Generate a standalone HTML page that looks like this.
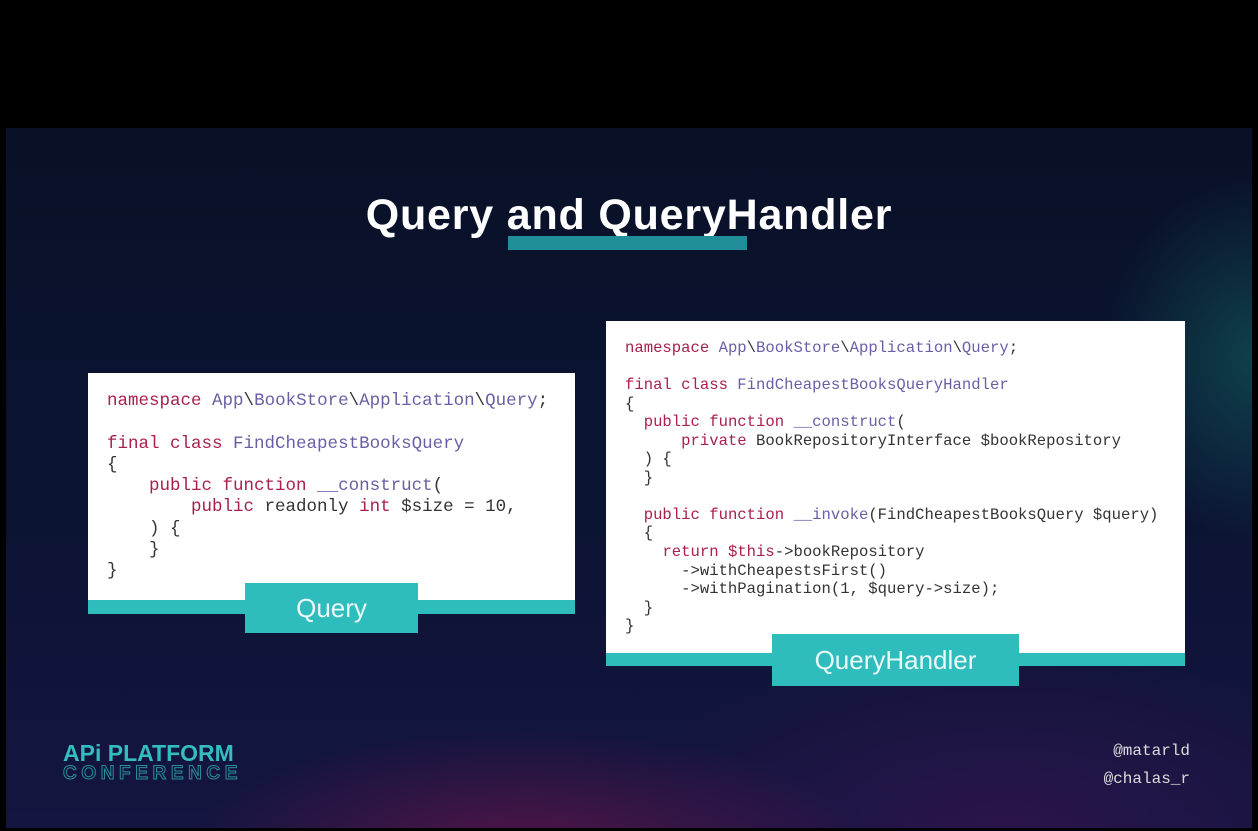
<!DOCTYPE html>
<html><head><meta charset="utf-8"><style>
*{margin:0;padding:0;box-sizing:border-box}
body{width:1258px;height:831px;background:#000;position:relative;overflow:hidden;font-family:"Liberation Sans",sans-serif}
.slide{position:absolute;left:6px;top:128px;width:1246px;height:700px;overflow:hidden;
background:
radial-gradient(ellipse 220px 260px at 1250px 230px,rgba(20,120,110,.45),transparent 70%),
radial-gradient(ellipse 450px 160px at 520px 720px,rgba(140,20,80,.5),transparent 75%),
radial-gradient(ellipse 500px 250px at 1000px 700px,rgba(70,20,90,.45),transparent 75%),
linear-gradient(180deg,#091128 0%,#0b1432 50%,#141540 100%);}
h1{position:absolute;left:0;width:1258px;top:191px;text-align:center;color:#fff;font-size:43px;font-weight:bold;letter-spacing:0.8px}
.ul{position:absolute;left:508px;top:236px;width:239px;height:14px;background:#1f8e98}
.card{position:absolute;background:#fff}
.bar{position:absolute;background:#2fbcbd}
.tab{position:absolute;background:#2fbcbd;color:#eaf8f8;text-align:center;font-size:26px}
pre{position:absolute;font-family:"Liberation Mono",monospace;color:#333}
.k{color:#a8204e}.c{color:#6b5ea6}
.l{font-size:17.5px;line-height:21.3px}
.r{font-size:15.6px;line-height:18.55px}
.h{position:absolute;right:68px;color:#ddd;font-family:"Liberation Mono",monospace;font-size:16px;text-align:right}
</style></head><body>
<div class="slide"></div>
<h1>Query and QueryHandler</h1>
<div class="ul"></div>
<div class="card" style="left:88px;top:373px;width:487px;height:228px"></div>
<div class="bar" style="left:88px;top:600px;width:487px;height:14px"></div>
<div class="tab" style="left:245px;top:583px;width:173px;height:50px;line-height:50px">Query</div>
<pre class="l" style="left:107px;top:391px"><span class="k">namespace</span> <span class="c">App</span>\<span class="c">BookStore</span>\<span class="c">Application</span>\<span class="c">Query</span>;

<span class="k">final class</span> <span class="c">FindCheapestBooksQuery</span>
{
    <span class="k">public function</span> <span class="c">__construct</span>(
        <span class="k">public</span> readonly <span class="k">int</span> $size = 10,
    ) {
    }
}</pre>
<div class="card" style="left:606px;top:321px;width:579px;height:333px"></div>
<div class="bar" style="left:606px;top:653px;width:579px;height:13px"></div>
<div class="tab" style="left:772px;top:634px;width:247px;height:52px;line-height:52px">QueryHandler</div>
<pre class="r" style="left:625px;top:339px"><span class="k">namespace</span> <span class="c">App</span>\<span class="c">BookStore</span>\<span class="c">Application</span>\<span class="c">Query</span>;

<span class="k">final class</span> <span class="c">FindCheapestBooksQueryHandler</span>
{
  <span class="k">public function</span> <span class="c">__construct</span>(
      <span class="k">private</span> BookRepositoryInterface $bookRepository
  ) {
  }

  <span class="k">public function</span> <span class="c">__invoke</span>(FindCheapestBooksQuery $query)
  {
    <span class="k">return</span> <span class="k">$this</span>->bookRepository
      ->withCheapestsFirst()
      ->withPagination(1, $query->size);
  }
}</pre>
<div style="position:absolute;left:63px;top:741px;color:#35bcc0;font-weight:bold;font-size:23px;letter-spacing:0px;line-height:24px">APi PLATFORM</div>
<div style="position:absolute;left:63px;top:764px;color:transparent;-webkit-text-stroke:1px #2a8f9a;font-weight:bold;font-size:19px;letter-spacing:4.6px;line-height:20px">CONFERENCE</div>
<div class="h" style="top:742px">@matarld</div>
<div class="h" style="top:770px">@chalas_r</div>
</body></html>
